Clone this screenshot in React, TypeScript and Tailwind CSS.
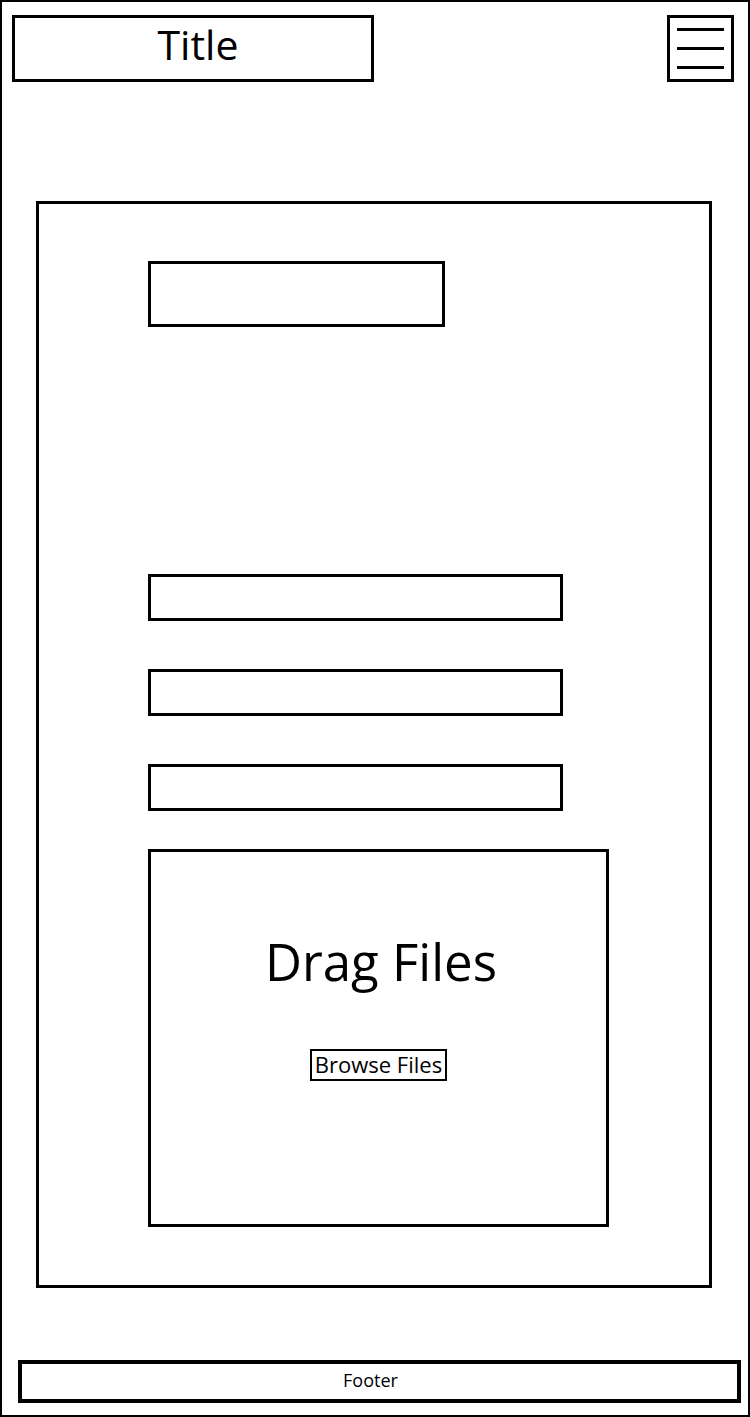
import React from "react";

export default function App() {
  const font = { fontFamily: '"Open Sans", "Noto Sans", sans-serif' };
  return (
    <div
      className="w-[750px] h-[1417px] bg-white border-2 border-black flex flex-col text-black"
      style={font}
    >
      {/* Header */}
      <div className="flex items-start justify-between pt-[13px] pl-[10px] pr-[14px]">
        <div className="w-[362px] h-[67px] border-[3px] border-black flex items-center justify-center pl-[10px] pb-[8px]">
          <span className="text-[41px] leading-none">Title</span>
        </div>
        <button className="w-[67px] h-[67px] border-[3px] border-black flex flex-col items-center justify-center gap-[16px]">
          <span className="block w-[47px] h-[3px] bg-black" />
          <span className="block w-[47px] h-[3px] bg-black" />
          <span className="block w-[47px] h-[3px] bg-black" />
        </button>
      </div>

      {/* Main panel */}
      <div className="mt-[119px] ml-[34px] w-[676px] h-[1087px] border-[3px] border-black flex flex-col pl-[109px] pt-[57px]">
        <div className="w-[297px] h-[66px] border-[3px] border-black" />
        <div className="mt-[247px] w-[415px] h-[47px] border-[3px] border-black" />
        <div className="mt-[48px] w-[415px] h-[47px] border-[3px] border-black" />
        <div className="mt-[48px] w-[415px] h-[47px] border-[3px] border-black" />
        <div className="mt-[38px] w-[461px] h-[378px] border-[3px] border-black flex flex-col items-center">
          <div className="mt-[84px] text-[51px] leading-none pl-[5px]">Drag Files</div>
          <button className="mt-[62px] w-[137px] h-[32px] border-2 border-black flex items-center justify-center pb-[3px]">
            <span className="text-[22px] leading-[28px]">Browse Files</span>
          </button>
        </div>
      </div>

      {/* Footer */}
      <div className="mt-[72px] ml-[16px] w-[723px] h-[43px] border-4 border-black flex items-center justify-center pr-[18px] pb-[4px]">
        <span className="text-[18px] leading-none">Footer</span>
      </div>
    </div>
  );
}
